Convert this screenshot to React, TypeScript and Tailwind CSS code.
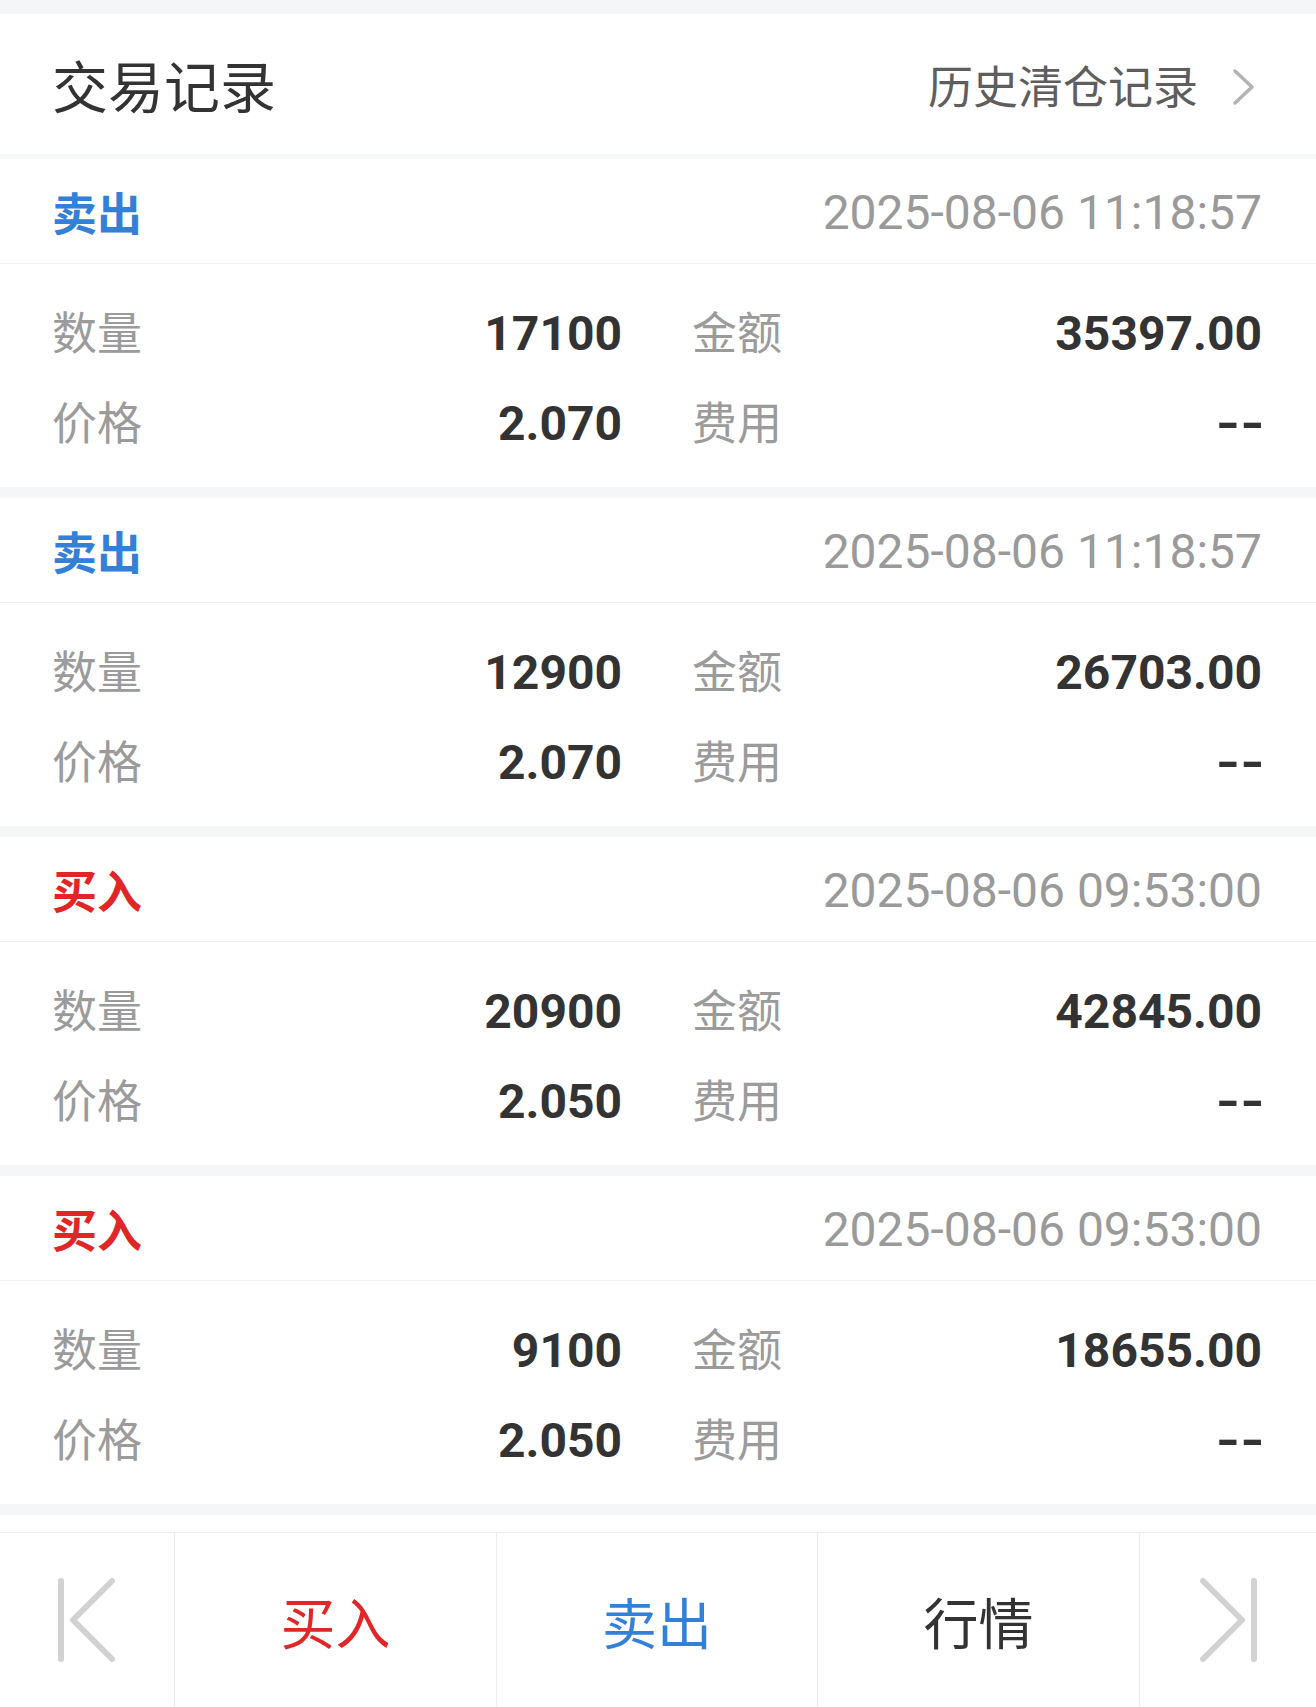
import React from "react";

const trades = [
  { side: "卖出", time: "2025-08-06 11:18:57", qty: "17100", amount: "35397.00", price: "2.070", fee: "--" },
  { side: "卖出", time: "2025-08-06 11:18:57", qty: "12900", amount: "26703.00", price: "2.070", fee: "--" },
  { side: "买入", time: "2025-08-06 09:53:00", qty: "20900", amount: "42845.00", price: "2.050", fee: "--" },
  { side: "买入", time: "2025-08-06 09:53:00", qty: "9100", amount: "18655.00", price: "2.050", fee: "--" },
];

const cjk = "font-['Noto_Sans_CJK_SC','Noto_Sans',sans-serif]";
const num = "font-[Roboto,'Noto_Sans_CJK_SC',sans-serif]";

function Cell({ label, value }: { label: string; value: string }) {
  const dash = value === "--";
  return (
    <div className="flex w-[570px] items-center justify-between">
      <span className={`${cjk} -translate-y-[2px] text-[45px] leading-none text-[#9b9b9b]`}>{label}</span>
      <span
        className={`${num} text-[48px] font-bold leading-none text-[#333333] ${
          dash ? "-mr-[3px] origin-right translate-y-[2px] scale-x-[1.3]" : "translate-y-[2px]"
        }`}
      >
        {value}
      </span>
    </div>
  );
}

function TradeCard({ t }: { t: (typeof trades)[number] }) {
  const buy = t.side === "买入";
  return (
    <div className="bg-white">
      <div className="flex h-[105px] items-center justify-between border-b border-[#f1f1f1] pl-[52px] pr-[54px]">
        <span
          className={`${cjk} text-[45px] font-bold leading-none ${buy ? "text-[#e02626]" : "text-[#3380d9]"}`}
        >
          {t.side}
        </span>
        <span className={`${num} translate-y-[2px] text-[48px] leading-none text-[#9a9a9a]`}>{t.time}</span>
      </div>
      <div className="flex flex-col pt-[23px] pb-[20px] pl-[52px] pr-[54px]">
        <div className="flex h-[90px] items-center gap-[70px]">
          <Cell label="数量" value={t.qty} />
          <Cell label="金额" value={t.amount} />
        </div>
        <div className="flex h-[90px] items-center gap-[70px]">
          <Cell label="价格" value={t.price} />
          <Cell label="费用" value={t.fee} />
        </div>
      </div>
    </div>
  );
}

function FirstIcon() {
  return (
    <svg width="60" height="84" viewBox="0 0 60 84" fill="none" stroke="#d2d2d2" strokeWidth="6" strokeLinecap="round" strokeLinejoin="round">
      <line x1="4" y1="3" x2="4" y2="81" />
      <polyline points="55,3 16,42 55,81" />
    </svg>
  );
}

function LastIcon() {
  return (
    <svg width="60" height="84" viewBox="0 0 60 84" fill="none" stroke="#d2d2d2" strokeWidth="6" strokeLinecap="round" strokeLinejoin="round">
      <line x1="56" y1="3" x2="56" y2="81" />
      <polyline points="5,3 44,42 5,81" />
    </svg>
  );
}

export default function App() {
  return (
    <div className="flex min-h-[1707px] w-[1316px] flex-col bg-[#f5f6f8] pt-[14px]">
      {/* header */}
      <div className="flex h-[140px] items-center justify-between bg-white pl-[52px] pr-[60px]">
        <h1 className={`${cjk} text-[56px] font-normal leading-none text-[#333333]`}>交易记录</h1>
        <div className="flex items-center gap-[34px]">
          <span className={`${cjk} text-[45px] leading-none text-[#5e5e5e]`}>历史清仓记录</span>
          <svg className="translate-y-[3px]" width="24" height="38" viewBox="0 0 24 38" fill="none" stroke="#b3b3b3" strokeWidth="3.5" strokeLinecap="round" strokeLinejoin="round">
            <polyline points="3,3 20,19 3,35" />
          </svg>
        </div>
      </div>

      <div className="mt-[5px] flex flex-col gap-[11px]">
        {trades.map((t, i) => (
          <TradeCard key={i} t={t} />
        ))}
      </div>

      <div className="mt-[11px] h-[17px] bg-white" />

      {/* bottom bar */}
      <div className="grid h-[175px] grid-cols-[175px_322px_321px_322px_176px] border-t border-[#ececec] bg-white">
        <div className="flex items-center justify-center border-r border-[#ececec]">
          <FirstIcon />
        </div>
        <div className="flex items-center justify-center border-r border-[#ececec]">
          <span className={`${cjk} text-[55px] leading-none text-[#e02626]`}>买入</span>
        </div>
        <div className="flex items-center justify-center border-r border-[#ececec]">
          <span className={`${cjk} text-[55px] leading-none text-[#3380d9]`}>卖出</span>
        </div>
        <div className="flex items-center justify-center border-r border-[#ececec]">
          <span className={`${cjk} text-[55px] leading-none text-[#333333]`}>行情</span>
        </div>
        <div className="flex items-center justify-center">
          <LastIcon />
        </div>
      </div>
    </div>
  );
}
